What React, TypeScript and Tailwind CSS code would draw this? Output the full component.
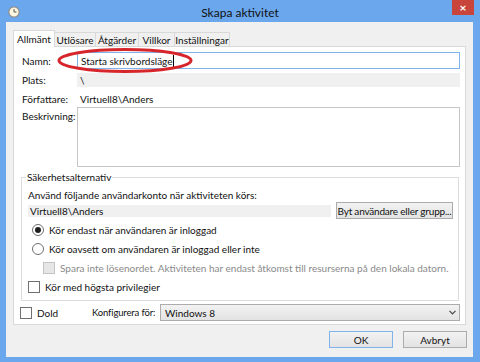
import React from 'react';

const font = { fontFamily: 'Lato, "Liberation Sans", sans-serif' };

function ClockIcon() {
  return (
    <svg width="12" height="12" viewBox="0 0 12 12">
      <circle cx="6" cy="6" r="5.2" fill="#fdf6e0" stroke="#8c8c8c" strokeWidth="1.2" />
      <path d="M6 3 V6 H8.5" fill="none" stroke="#555" strokeWidth="1" />
    </svg>
  );
}

function Radio({ checked }: { checked?: boolean }) {
  return (
    <span className="w-[12px] h-[12px] rounded-full border border-[#6f6f6f] bg-white flex items-center justify-center shrink-0">
      {checked && <span className="w-[6px] h-[6px] rounded-full bg-[#1e1e1e]" />}
    </span>
  );
}

function Check({ disabled }: { disabled?: boolean }) {
  return (
    <span
      className={`w-[12px] h-[12px] border shrink-0 ${
        disabled ? 'border-[#c4c4c4] bg-[#e6e6e6]' : 'border-[#6f6f6f] bg-white'
      }`}
    />
  );
}

const tabs = [
  { label: 'Utlösare', w: 'w-[41px]' },
  { label: 'Åtgärder', w: 'w-[43px]' },
  { label: 'Villkor', w: 'w-[36px]' },
  { label: 'Inställningar', w: 'w-[55px]' },
];

const btn = 'border bg-gradient-to-b from-[#f2f2f2] to-[#e3e3e3] flex items-center justify-center whitespace-nowrap';

export default function App() {
  return (
    <div className="relative w-[480px] h-[362px] bg-[#6ba7ec] flex flex-col text-[10px] leading-[12px] text-[#111]" style={font}>
      {/* Title bar */}
      <div className="relative h-[22px] shrink-0 flex items-center justify-center">
        <div className="absolute left-[8px] top-[6px]">
          <ClockIcon />
        </div>
        <span className="text-[12px] text-[#111] mt-[3px]">Skapa aktivitet</span>
        <div className="absolute right-[6px] top-0 w-[22px] h-[15px] bg-[#c9453c] flex items-center justify-center text-white text-[12px] font-bold leading-none">
          ×
        </div>
      </div>

      {/* Client area */}
      <div className="ml-[6px] mr-[7px] mb-[5px] flex-1 bg-[#f0f0f0] px-[7px] pt-[8px] flex flex-col">
        {/* Tabs */}
        <div className="flex items-end h-[16px] relative z-10">
          <div className="h-[17px] w-[42px] bg-white border border-b-0 border-[#d9d9d9] flex items-center justify-center mb-[-1px]">
            Allmänt
          </div>
          {tabs.map((t) => (
            <div
              key={t.label}
              className={`h-[14px] ${t.w} bg-[#f0f0f0] border border-b-0 border-l-0 border-[#d9d9d9] flex items-center justify-center`}
            >
              {t.label}
            </div>
          ))}
        </div>

        {/* Panel */}
        <div className="h-[279px] bg-white border border-[#d9d9d9] flex flex-col">
          <div className="flex items-center mt-[5px] h-[17px]">
            <span className="w-[63px] pl-[8px]">Namn:</span>
            <div className="w-[383px] h-[17px] border border-[#7eb4ea] flex items-center pl-[3px]">
              Starta skrivbordsläge
              <span className="w-px h-[12px] bg-black" />
            </div>
          </div>
          <div className="flex items-center mt-[4px] h-[14px]">
            <span className="w-[63px] pl-[8px]">Plats:</span>
            <div className="w-[383px] h-[14px] bg-[#f0f0f0] flex items-center pl-[3px]">\</div>
          </div>
          <div className="flex items-center mt-[4px] h-[15px]">
            <span className="w-[63px] pl-[8px]">Författare:</span>
            <span className="pl-[3px]">Virtuell8\Anders</span>
          </div>
          <div className="flex mt-[1px]">
            <span className="w-[63px] pl-[8px] pt-[3px]">Beskrivning:</span>
            <div className="w-[383px] h-[60px] border border-[#c6c6c6]" />
          </div>

          {/* Group box */}
          <div className="relative mt-[10px] ml-[7px] mr-[6px] h-[124px] border border-[#dcdcdc] flex flex-col pl-[6px]">
            <span className="absolute left-[4px] top-[-7px] bg-white px-[1px]">Säkerhetsalternativ</span>
            <span className="mt-[11px]">Använd följande användarkonto när aktiviteten körs:</span>
            <div className="flex items-center mt-[1px] h-[17px]">
              <div className="w-[303px] h-[12px] bg-[#f0f0f0] flex items-center pl-[2px]">Virtuell8\Anders</div>
              <div className={`ml-[5px] w-[117px] h-[17px] border-[#acacac] tracking-[-0.2px] ${btn}`}>
                Byt användare eller grupp...
              </div>
            </div>
            <div className="flex items-center gap-[5px] mt-[1px] h-[19px] pl-[4px]">
              <Radio checked />
              <span>Kör endast när användaren är inloggad</span>
            </div>
            <div className="flex items-center gap-[5px] h-[19px] pl-[4px]">
              <Radio />
              <span>Kör oavsett om användaren är inloggad eller inte</span>
            </div>
            <div className="flex items-center gap-[5px] h-[19px] pl-[15px] text-[#8a8a8a]">
              <Check disabled />
              <span>Spara inte lösenordet. Aktiviteten har endast åtkomst till resurserna på den lokala datorn.</span>
            </div>
            <div className="flex items-center gap-[5px] h-[19px] pl-[0px]">
              <Check />
              <span>Kör med högsta privilegier</span>
            </div>
          </div>

          {/* Bottom row in panel */}
          <div className="flex items-center mt-[3px] h-[17px]">
            <div className="flex items-center gap-[5px] pl-[6px] w-[78px] shrink-0">
              <Check />
              <span>Dold</span>
            </div>
            <span className="w-[68px] shrink-0 whitespace-nowrap text-[9.5px] tracking-[-0.15px]">Konfigurera för:</span>
            <div className={`w-[300px] h-[17px] border-[#acacac] ${btn} !justify-between pl-[4px] pr-[3px]`}>
              <span>Windows 8</span>
              <svg width="7" height="5" viewBox="0 0 7 5">
                <path d="M0.5 0.8 L3.5 3.8 L6.5 0.8" fill="none" stroke="#444" strokeWidth="1.2" />
              </svg>
            </div>
          </div>
        </div>

        {/* Dialog buttons */}
        <div className="flex justify-end gap-[10px] mt-[6px] mr-[-1px]">
          <div className={`w-[64px] h-[17px] border-[#7eb4ea] ${btn}`}>OK</div>
          <div className={`w-[64px] h-[17px] border-[#acacac] ${btn}`}>Avbryt</div>
        </div>
      </div>

      {/* Red annotation ellipse */}
      <svg className="absolute left-[56px] top-[47px]" width="140" height="27" viewBox="0 0 140 27">
        <ellipse cx="69" cy="13.5" rx="66" ry="11" fill="none" stroke="#d7262b" strokeWidth="3" />
      </svg>
    </div>
  );
}
